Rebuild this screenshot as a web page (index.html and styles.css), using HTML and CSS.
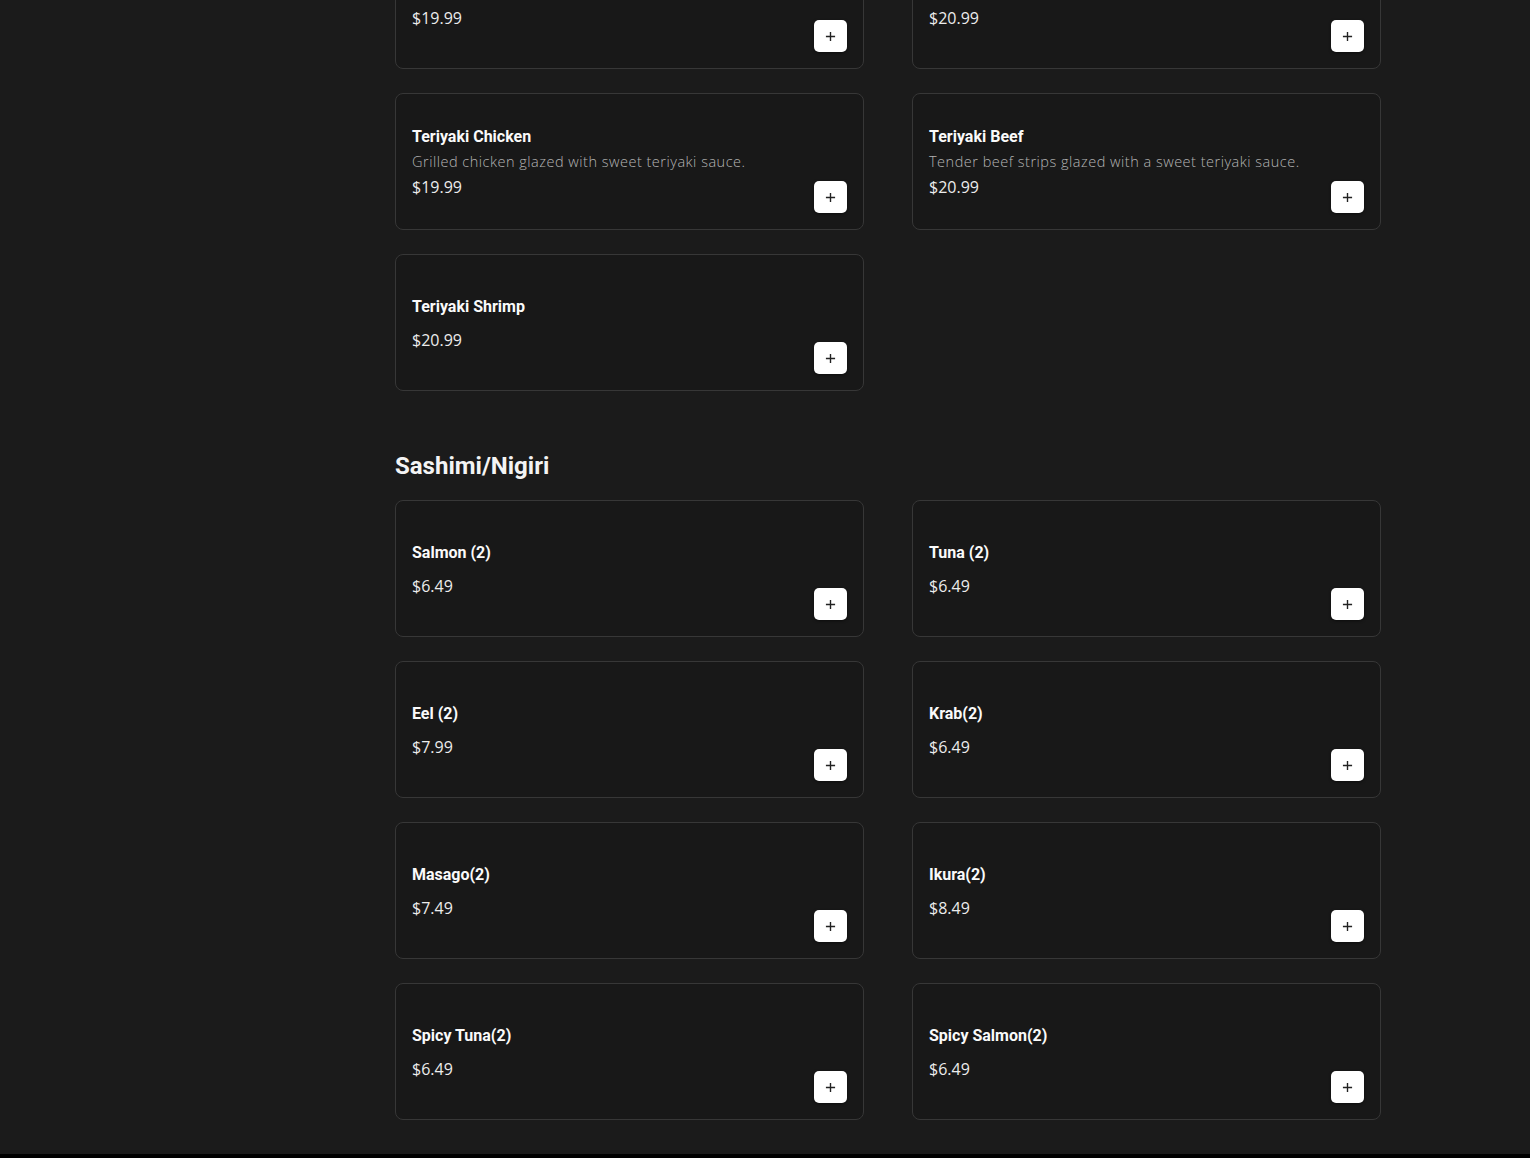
FILE: index.html
```html
<!DOCTYPE html>
<html lang="en">
<head>
<meta charset="utf-8">
<title>Menu</title>
<link rel="stylesheet" href="styles.css">
</head>
<body>
<main class="menu">
  <section class="section section-first">
    <div class="grid">
      <div class="card">
        <div class="info">
          <h3 class="name">Teriyaki Salmon</h3>
          <p class="price">$19.99</p>
        </div>
        <button class="add" aria-label="Add"><svg viewBox="0 0 12 12" width="11" height="11"><path d="M6 1v10M1 6h10" stroke="#222" stroke-width="1.5" fill="none"/></svg></button>
      </div>
      <div class="card">
        <div class="info">
          <h3 class="name">Teriyaki Steak</h3>
          <p class="price">$20.99</p>
        </div>
        <button class="add" aria-label="Add"><svg viewBox="0 0 12 12" width="11" height="11"><path d="M6 1v10M1 6h10" stroke="#222" stroke-width="1.5" fill="none"/></svg></button>
      </div>
      <div class="card">
        <div class="info">
          <h3 class="name has-desc">Teriyaki Chicken</h3>
          <p class="desc">Grilled chicken glazed with sweet teriyaki sauce.</p>
          <p class="price">$19.99</p>
        </div>
        <button class="add" aria-label="Add"><svg viewBox="0 0 12 12" width="11" height="11"><path d="M6 1v10M1 6h10" stroke="#222" stroke-width="1.5" fill="none"/></svg></button>
      </div>
      <div class="card">
        <div class="info">
          <h3 class="name has-desc">Teriyaki Beef</h3>
          <p class="desc">Tender beef strips glazed with a sweet teriyaki sauce.</p>
          <p class="price">$20.99</p>
        </div>
        <button class="add" aria-label="Add"><svg viewBox="0 0 12 12" width="11" height="11"><path d="M6 1v10M1 6h10" stroke="#222" stroke-width="1.5" fill="none"/></svg></button>
      </div>
      <div class="card">
        <div class="info">
          <h3 class="name">Teriyaki Shrimp</h3>
          <p class="price">$20.99</p>
        </div>
        <button class="add" aria-label="Add"><svg viewBox="0 0 12 12" width="11" height="11"><path d="M6 1v10M1 6h10" stroke="#222" stroke-width="1.5" fill="none"/></svg></button>
      </div>
    </div>
  </section>

  <section class="section">
    <h2 class="section-title">Sashimi/Nigiri</h2>
    <div class="grid">
      <div class="card">
        <div class="info">
          <h3 class="name">Salmon (2)</h3>
          <p class="price">$6.49</p>
        </div>
        <button class="add" aria-label="Add"><svg viewBox="0 0 12 12" width="11" height="11"><path d="M6 1v10M1 6h10" stroke="#222" stroke-width="1.5" fill="none"/></svg></button>
      </div>
      <div class="card">
        <div class="info">
          <h3 class="name">Tuna (2)</h3>
          <p class="price">$6.49</p>
        </div>
        <button class="add" aria-label="Add"><svg viewBox="0 0 12 12" width="11" height="11"><path d="M6 1v10M1 6h10" stroke="#222" stroke-width="1.5" fill="none"/></svg></button>
      </div>
      <div class="card">
        <div class="info">
          <h3 class="name">Eel (2)</h3>
          <p class="price">$7.99</p>
        </div>
        <button class="add" aria-label="Add"><svg viewBox="0 0 12 12" width="11" height="11"><path d="M6 1v10M1 6h10" stroke="#222" stroke-width="1.5" fill="none"/></svg></button>
      </div>
      <div class="card">
        <div class="info">
          <h3 class="name">Krab(2)</h3>
          <p class="price">$6.49</p>
        </div>
        <button class="add" aria-label="Add"><svg viewBox="0 0 12 12" width="11" height="11"><path d="M6 1v10M1 6h10" stroke="#222" stroke-width="1.5" fill="none"/></svg></button>
      </div>
      <div class="card">
        <div class="info">
          <h3 class="name">Masago(2)</h3>
          <p class="price">$7.49</p>
        </div>
        <button class="add" aria-label="Add"><svg viewBox="0 0 12 12" width="11" height="11"><path d="M6 1v10M1 6h10" stroke="#222" stroke-width="1.5" fill="none"/></svg></button>
      </div>
      <div class="card">
        <div class="info">
          <h3 class="name">Ikura(2)</h3>
          <p class="price">$8.49</p>
        </div>
        <button class="add" aria-label="Add"><svg viewBox="0 0 12 12" width="11" height="11"><path d="M6 1v10M1 6h10" stroke="#222" stroke-width="1.5" fill="none"/></svg></button>
      </div>
      <div class="card">
        <div class="info">
          <h3 class="name">Spicy Tuna(2)</h3>
          <p class="price">$6.49</p>
        </div>
        <button class="add" aria-label="Add"><svg viewBox="0 0 12 12" width="11" height="11"><path d="M6 1v10M1 6h10" stroke="#222" stroke-width="1.5" fill="none"/></svg></button>
      </div>
      <div class="card">
        <div class="info">
          <h3 class="name">Spicy Salmon(2)</h3>
          <p class="price">$6.49</p>
        </div>
        <button class="add" aria-label="Add"><svg viewBox="0 0 12 12" width="11" height="11"><path d="M6 1v10M1 6h10" stroke="#222" stroke-width="1.5" fill="none"/></svg></button>
      </div>
    </div>
  </section>
</main>
<footer class="footer"></footer>
</body>
</html>
```

FILE: styles.css
```css
* { box-sizing: border-box; }

html, body {
  margin: 0;
  padding: 0;
  background: #1b1b1b;
}

body {
  font-family: Roboto, "Liberation Sans", sans-serif;
  color: #f2f2f2;
  overflow: hidden;
}

.menu {
  width: 986px;
  margin-left: 395px;
  padding-bottom: 34px;
}

.section-first {
  margin-top: -68px;
}

.section-title {
  margin: 59px 0 18px;
  font-family: Roboto, "Liberation Sans", sans-serif;
  font-size: 24px;
  line-height: 32px;
  font-weight: 700;
  color: #f4f4f4;
}

.grid {
  display: grid;
  grid-template-columns: 1fr 1fr;
  column-gap: 48px;
  row-gap: 24px;
}

.card {
  height: 137px;
  display: flex;
  justify-content: space-between;
  padding: 16px;
  background: #181818;
  border: 1px solid #373737;
  border-radius: 8px;
}

.info {
  align-self: center;
  display: flex;
  flex-direction: column;
  padding-top: 4px;
}

.name {
  margin: 0 0 12px;
  font-family: Roboto, "Liberation Sans", sans-serif;
  font-size: 16px;
  line-height: 20px;
  font-weight: 700;
  color: #fafafa;
}

.name.has-desc {
  margin-bottom: 5px;
}

.desc {
  margin: 0 0 4px;
  font-family: "Open Sans", "Noto Sans", sans-serif;
  font-weight: 300;
  font-size: 14.5px;
  line-height: 20px;
  letter-spacing: 0.5px;
  color: #b4b4b4;
}

.price {
  margin: -1px 0 1px;
  font-family: "Open Sans", "Noto Sans", sans-serif;
  font-weight: 400;
  font-size: 16px;
  line-height: 24px;
  letter-spacing: 0;
  color: #ececec;
}

.add {
  align-self: flex-end;
  width: 33px;
  height: 32px;
  padding: 0;
  display: flex;
  align-items: center;
  justify-content: center;
  background: #ffffff;
  border: none;
  border-radius: 5px;
  box-shadow: 0 1px 3px rgba(0, 0, 0, 0.5);
  cursor: pointer;
}

.footer {
  height: 120px;
  background: #000;
}
```
